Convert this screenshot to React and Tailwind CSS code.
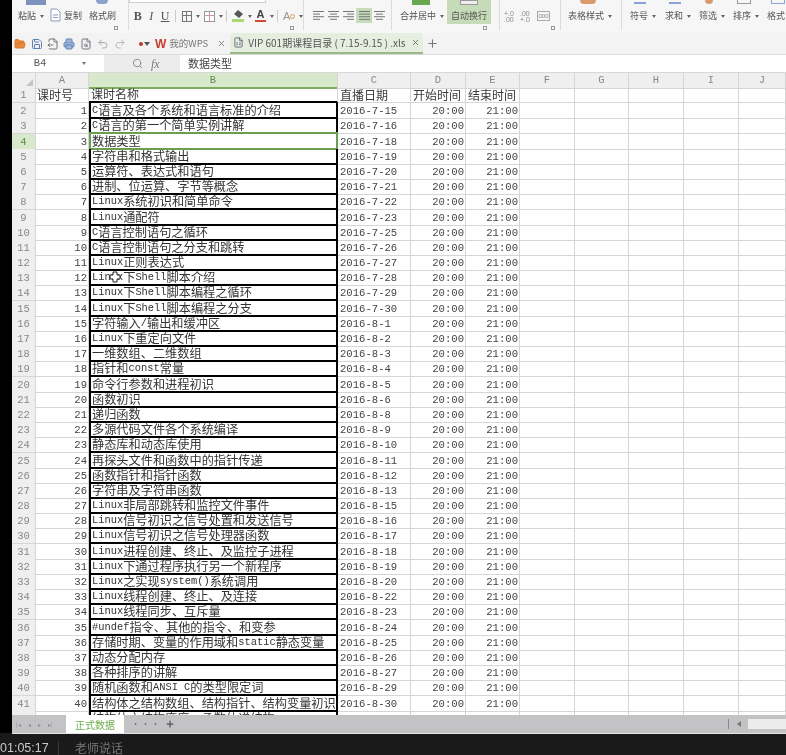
import { FolderOpen, Save, FileOutput, Printer, FileSearch, Undo2, Redo2, Search, Plus, X, FileSpreadsheet } from 'lucide-react'

const cjk = '"Noto Sans CJK SC", "Noto Sans", sans-serif'

const lessons = [
  ['C语言及各个系统和语言标准的介绍', '2016-7-15'],
  ['C语言的第一个简单实例讲解', '2016-7-16'],
  ['数据类型', '2016-7-18'],
  ['字符串和格式输出', '2016-7-19'],
  ['运算符、表达式和语句', '2016-7-20'],
  ['进制、位运算、字节等概念', '2016-7-21'],
  ['Linux系统初识和简单命令', '2016-7-22'],
  ['Linux通配符', '2016-7-23'],
  ['C语言控制语句之循环', '2016-7-25'],
  ['C语言控制语句之分支和跳转', '2016-7-26'],
  ['Linux正则表达式', '2016-7-27'],
  ['Linux下Shell脚本介绍', '2016-7-28'],
  ['Linux下Shell脚本编程之循环', '2016-7-29'],
  ['Linux下Shell脚本编程之分支', '2016-7-30'],
  ['字符输入/输出和缓冲区', '2016-8-1'],
  ['Linux下重定向文件', '2016-8-2'],
  ['一维数组、二维数组', '2016-8-3'],
  ['指针和const常量', '2016-8-4'],
  ['命令行参数和进程初识', '2016-8-5'],
  ['函数初识', '2016-8-6'],
  ['递归函数', '2016-8-8'],
  ['多源代码文件各个系统编译', '2016-8-9'],
  ['静态库和动态库使用', '2016-8-10'],
  ['再探头文件和函数中的指针传递', '2016-8-11'],
  ['函数指针和指针函数', '2016-8-12'],
  ['字符串及字符串函数', '2016-8-13'],
  ['Linux非局部跳转和监控文件事件', '2016-8-15'],
  ['Linux信号初识之信号处置和发送信号', '2016-8-16'],
  ['Linux信号初识之信号处理器函数', '2016-8-17'],
  ['Linux进程创建、终止、及监控子进程', '2016-8-18'],
  ['Linux下通过程序执行另一个新程序', '2016-8-19'],
  ['Linux之实现system()系统调用', '2016-8-20'],
  ['Linux线程创建、终止、及连接', '2016-8-22'],
  ['Linux线程同步、互斥量', '2016-8-23'],
  ['#undef指令、其他的指令、和变参', '2016-8-24'],
  ['存储时期、变量的作用域和static静态变量', '2016-8-25'],
  ['动态分配内存', '2016-8-26'],
  ['各种排序的讲解', '2016-8-27'],
  ['随机函数和ANSI C的类型限定词', '2016-8-29'],
  ['结构体之结构数组、结构指针、结构变量初识', '2016-8-30'],
  ['结构体之结构庞度、函数体递结构', '2016-8-31'],
]

const rowGrid = 'grid h-[15.2px] grid-cols-[24px_53px_249px_73px_55px_54px_55px_54px_55px_55px_47px]'

// 半角用等宽字体，全角用黑体
function Mixed({ text }) {
  return text.split(/([\x20-\x7e]+)/).map((part, i) =>
    /^[\x20-\x7e]+$/.test(part)
      ? <span key={i} className="font-['Liberation_Mono'] text-[10.4px] whitespace-pre">{part}</span>
      : <span key={i}>{part}</span>
  )
}

function Cell({ children, right, className = '' }) {
  return (
    <div className={`flex items-end overflow-hidden border-r border-b border-[#d6d6d6] whitespace-nowrap text-[12px] leading-[14px] text-[#3a3a3a] ${right ? 'justify-end pr-px' : 'pl-0.5'} ${className}`}>
      {children}
    </div>
  )
}

function Mono({ children }) {
  return <span className="font-['Liberation_Mono'] text-[10.6px] text-[#444]">{children}</span>
}

function Caret() {
  return <span className="ml-1 inline-block h-0 w-0 border-x-[2px] border-t-[3px] border-x-transparent border-t-[#666] align-middle" />
}

function Launcher({ className = '' }) {
  return <span className={`block h-1 w-1 border border-[#999] ${className}`} />
}

function Sep({ className = '' }) {
  return <div className={`h-[30px] w-px shrink-0 bg-[#dcdcdc] ${className}`} />
}

function LinesIcon({ align }) {
  const rows = align === 'left' ? [[0, 11], [0, 7], [0, 11], [0, 7]]
    : align === 'center' ? [[0, 11], [2, 7], [0, 11], [2, 7]]
    : align === 'right' ? [[0, 11], [4, 7], [0, 11], [4, 7]]
    : [[0, 11], [0, 11], [0, 11], [0, 11]]
  return (
    <svg width="11" height="11" viewBox="0 0 11 11" className="text-[#777]">
      {rows.map(([x, w], i) => <rect key={i} x={x} y={1 + i * 2.6} width={w} height="1" fill="currentColor" />)}
    </svg>
  )
}

function Ribbon() {
  return (
    <div className="flex h-[33px] items-start overflow-hidden bg-[#f6f6f6] text-[9px] leading-[12px] text-[#555]">
      {/* 剪贴板 */}
      <div className="relative flex h-full w-[116px] shrink-0">
        <div className="ml-[6px] flex w-[28px] flex-col">
          <div className="ml-[8px] h-[5px] w-[20px] bg-[#7d93bd]" />
          <div className="mt-[5px] whitespace-nowrap">粘贴<Caret /></div>
        </div>
        <svg width="11" height="14" viewBox="0 0 11 14" className="mt-[8px] ml-[4px]">
          <path d="M1 1h6l3 3v9H1z" fill="#fff" stroke="#8a9bb8" />
          <path d="M3 7h5M3 9.500h5" stroke="#8a9bb8" />
        </svg>
        <div className="mt-[10px] ml-[3px] whitespace-nowrap">复制</div>
        <div className="mt-[10px] ml-[7px] whitespace-nowrap">格式刷</div>
        <div className="absolute top-0 left-[84px] h-[4px] w-[12px] rounded-b bg-[#8ba3cc]" />
        <Launcher className="absolute bottom-[3px] left-[102px]" />
      </div>
      <Sep />
      {/* 字体 */}
      <div className="relative flex h-full w-[174px] shrink-0 flex-col">
        <div className="h-[3px] w-[137px] border-x border-b border-[#d0d0d0] bg-white" />
        <div className="mt-[5px] flex h-[16px] items-center font-['Liberation_Serif'] text-[12px] text-[#555]">
          <b className="ml-[2px] w-[15px] text-center">B</b>
          <i className="w-[15px] text-center font-['Liberation_Serif']">I</i>
          <span className="w-[16px] text-center underline">U</span>
          <div className="ml-[3px] h-[12px] w-px bg-[#ccc]" />
          <div className="ml-[6px] grid h-[11px] w-[11px] grid-cols-2 grid-rows-2 border border-[#777]">
            <span className="border-r border-b border-[#777]" /><span className="border-b border-[#777]" /><span className="border-r border-[#777]" /><span />
          </div>
          <Caret />
          <div className="ml-[4px] grid h-[11px] w-[12px] grid-cols-2 grid-rows-2 border border-[#999] bg-white">
            <span className="border-r border-b border-[#c99]" /><span className="border-b border-[#c99]" /><span className="border-r border-[#c99]" /><span />
          </div>
          <Caret />
          <div className="ml-[3px] h-[12px] w-px bg-[#ccc]" />
          <div className="ml-[5px] flex w-[12px] flex-col items-center">
            <svg width="11" height="8" viewBox="0 0 11 8"><path d="M1 4l4-4 5 4-4 4z" fill="#555" /></svg>
            <span className="mt-px h-[3px] w-[12px] bg-[#a8d878]" />
          </div>
          <Caret />
          <div className="ml-[3px] flex w-[11px] flex-col items-center">
            <span className="font-['Liberation_Sans'] text-[11px] leading-[9px] font-bold text-[#444]">A</span>
            <span className="mt-px h-[2px] w-[11px] bg-[#d04a3c]" />
          </div>
          <Caret />
          <div className="ml-[3px] h-[12px] w-px bg-[#ccc]" />
          <span className="ml-[5px] font-['Liberation_Sans'] text-[11px] text-[#999]">A</span>
          <span className="h-[5px] w-[5px] rounded-full border border-[#d9a24a]" />
          <Caret />
        </div>
        <Launcher className="absolute right-[9px] bottom-[3px]" />
      </div>
      <Sep />
      {/* 对齐 */}
      <div className="flex h-full w-[87px] shrink-0 items-start pt-[8px] pl-[7px]">
        <span className="flex h-[15px] w-[15px] items-center justify-center"><LinesIcon align="left" /></span>
        <span className="flex h-[15px] w-[15px] items-center justify-center"><LinesIcon align="center" /></span>
        <span className="flex h-[15px] w-[15px] items-center justify-center"><LinesIcon align="right" /></span>
        <span className="flex h-[15px] w-[16px] items-center justify-center bg-[#c6dcb9]"><LinesIcon align="justify" /></span>
        <span className="flex h-[15px] w-[14px] items-center justify-center"><LinesIcon align="center" /></span>
      </div>
      <Sep />
      {/* 合并与换行 */}
      <div className="flex w-[49px] shrink-0 flex-col items-start pl-[8px]">
        <div className="ml-[12px] h-[5px] w-[18px] bg-[#6aa84f]" />
        <div className="mt-[5px] whitespace-nowrap">合并居中<Caret /></div>
      </div>
      <div className="ml-[6px] flex h-[24px] w-[44px] shrink-0 flex-col items-center bg-[#c6dcb9]">
        <div className="h-[5px] w-[18px] border border-[#999] bg-[#eee]" />
        <div className="mt-[5px] whitespace-nowrap">自动换行</div>
      </div>
      <div className="relative h-full w-[4px] shrink-0"><Launcher className="absolute -left-[8px] bottom-[3px]" /></div>
      <Sep className="ml-[4px]" />
      {/* 数字 */}
      <div className="relative flex h-full w-[60px] shrink-0 items-start pt-[11px] pl-[4px] font-['Liberation_Sans'] text-[7px] leading-[6px] text-[#888]">
        <span className="w-[16px]">+.0<br />.00</span>
        <span className="w-[17px]">.00<br />+.0</span>
        <span className="flex h-[10px] w-[13px] items-center justify-center border border-[#aaa] text-[6px]">000</span>
        <Launcher className="absolute right-[5px] bottom-[3px]" />
      </div>
      <Sep className="mr-[7px]" />
      {/* 右侧 */}
      <div className="flex h-full shrink-0 flex-col items-start">
        <div className="ml-[12px] h-[4px] w-[16px] rounded-b bg-[#d99a6c]" />
        <div className="mt-[6px] whitespace-nowrap">表格样式<Caret /></div>
      </div>
      <Sep className="mr-[8px] ml-[9px]" />
      <div className="flex shrink-0 flex-col">
        <div className="ml-[4px] h-[4px] w-[12px] border-b-2 border-[#8aa4d8]" />
        <div className="mt-[6px] whitespace-nowrap">符号<Caret /></div>
      </div>
      <div className="ml-[9px] flex shrink-0 flex-col">
        <div className="ml-[4px] h-[4px] w-[12px] border-b-2 border-[#8aa4d8]" />
        <div className="mt-[6px] whitespace-nowrap">求和<Caret /></div>
      </div>
      <div className="ml-[8px] flex shrink-0 flex-col">
        <div className="ml-[6px] h-[4px] w-[8px] rounded-b bg-[#d99a6c]" />
        <div className="mt-[6px] whitespace-nowrap">筛选<Caret /></div>
      </div>
      <div className="ml-[8px] flex shrink-0 flex-col">
        <div className="ml-[4px] h-[4px] w-[14px] border-x border-b border-[#999]" />
        <div className="mt-[6px] whitespace-nowrap">排序<Caret /></div>
      </div>
      <div className="ml-[8px] flex shrink-0 flex-col">
        <div className="ml-[4px] h-[4px] w-[14px] border-x border-b border-[#8aa4d8]" />
        <div className="mt-[6px] whitespace-nowrap">格式<Caret /></div>
      </div>
    </div>
  )
}

function TabBar() {
  return (
    <div className="flex h-[22px] items-center border-b border-[#dadada] bg-[#f3f3f3] pl-[2px] text-[#666]">
      <FolderOpen size={12} fill="#e8883a" className="text-[#d9772b]" />
      <Save size={12} className="ml-[5px] text-[#5c7fb8]" />
      <FileOutput size={12} className="ml-[4px] text-[#777]" />
      <Printer size={12} fill="#9db4d8" className="ml-[4px] text-[#6484b6]" />
      <FileSearch size={12} className="ml-[5px] text-[#778]" />
      <Undo2 size={12} className="ml-[5px] text-[#aaa]" />
      <Redo2 size={12} className="ml-[5px] text-[#bbb]" />
      <div className="ml-[13px] flex items-center">
        <span className="h-[4px] w-[4px] rounded-full bg-[#c0392b]" />
        <span className="ml-px h-0 w-0 border-x-[3px] border-t-[4px] border-x-transparent border-t-[#555]" />
      </div>
      <span className="ml-[5px] font-['Liberation_Sans'] text-[12px] leading-none font-bold text-[#c8392f]">W</span>
      <span className="ml-[3px] text-[9.5px] whitespace-nowrap text-[#777]">我的WPS</span>
      <X size={9} className="ml-[9px] text-[#666]" />
      <div className="ml-[4px] flex h-[21px] w-[193px] items-center self-start rounded-t border-b-2 border-[#9ab88a] bg-[#e6eee0] pl-[3px] text-[10px] whitespace-nowrap text-[#555]">
        <FileSpreadsheet size={11} className="text-[#667]" />
        <span className="ml-[4px] w-[158px] overflow-hidden">VIP 601期课程目录 ( 7.15-9.15 ) .xls</span>
        <X size={9} className="ml-[5px] text-[#555]" />
      </div>
      <Plus size={13} className="ml-[3px] text-[#777]" />
    </div>
  )
}

function FormulaBar() {
  return (
    <div className="flex h-[18px] items-stretch border-b border-[#d8d8d8] bg-[#ececec]">
      <div className="flex w-[92px] items-center justify-center bg-white pl-[4px]">
        <span className="font-['Liberation_Mono'] text-[10.5px] text-[#555]">B4</span>
        <span className="ml-[36px] h-0 w-0 border-x-[2px] border-t-[3px] border-x-transparent border-t-[#777]" />
      </div>
      <div className="flex w-[76px] items-center pl-[28px]">
        <Search size={11} className="text-[#888]" />
        <span className="ml-[8px] font-['Liberation_Serif'] text-[12px] text-[#777] italic">fx</span>
      </div>
      <div className="flex flex-1 items-center bg-white pl-[8px] text-[11px] text-[#444]">数据类型</div>
    </div>
  )
}

function ColHeaders() {
  const cols = ['A', 'B', 'C', 'D', 'E', 'F', 'G', 'H', 'I', 'J']
  return (
    <div className="grid h-[15px] grid-cols-[24px_53px_249px_73px_55px_54px_55px_54px_55px_55px_47px] bg-[#efefef] font-['Liberation_Mono'] text-[10.5px] leading-[14px] text-[#888]">
      <div className="flex items-end justify-end border-r border-b border-[#d6d6d6] pr-[2px] pb-[2px]">
        <span className="h-0 w-0 border-b-[7px] border-l-[7px] border-b-[#c4c4c4] border-l-transparent" />
      </div>
      {cols.map((c) => (
        <div key={c} className={`border-r text-center ${c === 'B' ? 'border-b-2 border-r-[#d6d6d6] border-b-[#7dae5e] bg-[#d7e8cb] text-[#5c8a44]' : 'border-b border-[#d6d6d6]'}`}>{c}</div>
      ))}
    </div>
  )
}

function RowNum({ n, active }) {
  return (
    <div className={`flex items-end justify-center border-r border-b border-[#d6d6d6] font-['Liberation_Mono'] text-[10.5px] leading-[14px] ${active ? 'bg-[#d7e8cb] text-[#5c8a44]' : 'bg-[#efefef] text-[#888]'}`}>{n}</div>
  )
}

function EmptyCells() {
  return (
    <>
      <Cell /><Cell /><Cell /><Cell /><Cell />
    </>
  )
}

function Sheet() {
  return (
    <div className="h-[642px] overflow-hidden bg-white" style={{ fontFamily: cjk }}>
      <ColHeaders />
      <div className={rowGrid}>
        <RowNum n={1} />
        <Cell className="pl-px">课时号</Cell>
        <Cell className="border-b-2 border-b-black leading-[13px]">课时名称</Cell>
        <Cell>直播日期</Cell>
        <Cell>开始时间</Cell>
        <Cell>结束时间</Cell>
        <EmptyCells />
      </div>
      {lessons.map(([name, date], i) => (
        <div key={i} className={rowGrid}>
          <RowNum n={i + 2} active={i === 2} />
          <Cell right><Mono>{i + 1}</Mono></Cell>
          <div className="relative flex items-end overflow-visible border-x-2 border-b-2 border-black pl-px text-[12.2px] leading-[14px] whitespace-nowrap text-[#333]">
            <Mixed text={name} />
            {i === 2 && <span className="absolute -inset-x-[2px] -top-[2px] -bottom-[2px] border-2 border-[#6a9f4f]" />}
            {i === 11 && (
              <svg width="12" height="12" viewBox="0 0 12 12" className="absolute top-[1px] left-[18px]">
                <path d="M4 1h4v3h3v4H8v3H4V8H1V4h3z" fill="#fff" stroke="#222" />
              </svg>
            )}
          </div>
          <Cell className="pl-[2px]"><Mono>{date}</Mono></Cell>
          <Cell right><Mono>{i === 40 ? '21:00' : '20:00'}</Mono></Cell>
          <Cell right><Mono>21:00</Mono></Cell>
          <EmptyCells />
        </div>
      ))}
    </div>
  )
}

function SheetTabs() {
  return (
    <div className="flex h-[19px] items-stretch border-b border-[#e4e4e4] bg-[#c3c2c5] text-[#8f8f92]" style={{ fontFamily: cjk }}>
      <div className="flex w-[54px] items-center gap-[7px] pl-[4px] text-[6px]">
        <span>|◂</span><span>◂</span><span>▸</span><span>▸|</span>
      </div>
      <div className="flex w-[58px] items-center justify-center bg-white text-[10px] text-[#6cab4a]">正式数据</div>
      <div className="ml-[7px] flex items-center text-[9px] tracking-[1px] text-[#777]">•••</div>
      <Plus size={10} strokeWidth={3} className="ml-[4px] self-center text-[#555]" />
      <div className="flex flex-1 items-center justify-end">
        <span className="h-[10px] w-px bg-[#888]" />
        <span className="ml-[8px] h-0 w-0 border-y-[3px] border-r-[4px] border-y-transparent border-r-[#777]" />
        <span className="ml-[7px] h-[10px] w-[38px] bg-[#ececec]" />
      </div>
    </div>
  )
}

export default function App() {
  return (
    <div className="h-[755px] w-[786px] overflow-hidden bg-[#1a1a1a] blur-[0.35px]" style={{ fontFamily: cjk }}>
      <div className="flex h-[733px]">
        <div className="w-[12px] shrink-0 bg-black" />
        <div className="min-w-0 flex-1">
          <Ribbon />
          <TabBar />
          <FormulaBar />
          <Sheet />
          <SheetTabs />
        </div>
      </div>
      <div className="flex h-[22px] items-start pt-[8px]">
        <span className="w-[58px] font-['Liberation_Sans'] text-[12.5px] leading-[14px] text-[#c9c9c9]">01:05:17</span>
        <span className="h-[14px] w-px bg-[#3a3a3a]" />
        <span className="ml-[16px] text-[12px] leading-[14px] text-[#777]">老师说话</span>
      </div>
    </div>
  )
}
